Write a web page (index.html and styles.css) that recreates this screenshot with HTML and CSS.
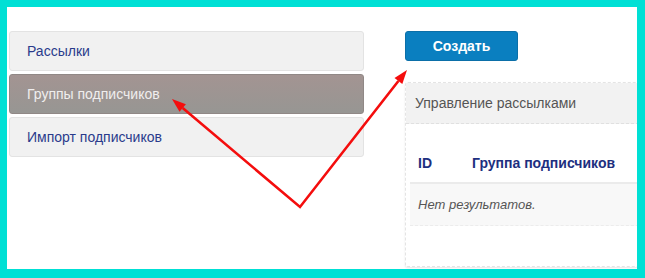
FILE: index.html
```html
<!DOCTYPE html>
<html lang="ru">
<head>
<meta charset="utf-8">
<title>Рассылки</title>
<link rel="stylesheet" href="styles.css">
</head>
<body>
<div class="frame">
  <nav class="menu">
    <a class="menu-item">Рассылки</a>
    <a class="menu-item active">Группы подписчиков</a>
    <a class="menu-item">Импорт подписчиков</a>
  </nav>
  <div class="content">
    <button class="btn">Создать</button>
    <div class="panel">
      <div class="panel-head">Управление рассылками</div>
      <div class="table">
        <div class="thead">
          <span class="col-id">ID</span>
          <span class="col-group">Группа подписчиков</span>
        </div>
        <div class="empty">Нет результатов.</div>
      </div>
    </div>
  </div>
</div>
<svg class="arrows" width="645" height="278" viewBox="0 0 645 278">
  <polyline points="182.7,108 300,207 398.4,81" fill="none" stroke="#f40d0d" stroke-width="2.6" stroke-linejoin="miter"/>
  <polygon points="172,99 185.9,104.2 179.5,111.8" fill="#f40d0d"/>
  <polygon points="407,70 402.3,84.1 394.5,77.9" fill="#f40d0d"/>
</svg>
</body>
</html>
```

FILE: styles.css
```css
html, body {
  margin: 0;
  padding: 0;
}
body {
  position: relative;
  width: 645px;
  height: 278px;
  box-sizing: border-box;
  padding: 7px 8px 9px 7px;
  background: #00e0d5;
  font-family: "Liberation Sans", Arial, sans-serif;
  overflow: hidden;
}
.frame {
  height: 262px;
  background: #fff;
  display: flex;
  gap: 41px;
  padding: 24px 0 0 2px;
  box-sizing: border-box;
  overflow: hidden;
}
.menu {
  width: 355px;
  flex-shrink: 0;
  display: flex;
  flex-direction: column;
  gap: 3px;
}
.menu-item {
  height: 40px;
  box-sizing: border-box;
  display: flex;
  align-items: center;
  padding-left: 17px;
  background: #f1f1f1;
  border: 1px solid #e3e3e3;
  border-radius: 3px;
  color: #2a3b8c;
  font-size: 14px;
}
.menu-item.active {
  background: linear-gradient(#a39492, #979693);
  border-color: #908886;
  color: #f0eeee;
}
.content {
  flex: 1;
  min-width: 0;
  display: flex;
  flex-direction: column;
  align-items: flex-start;
}
.btn {
  width: 113px;
  height: 30px;
  border: 1px solid #0b6fa8;
  border-radius: 3px;
  background: #0a7fc0;
  color: #fff;
  font-family: inherit;
  font-size: 14px;
  font-weight: bold;
  padding: 0;
}
.panel {
  margin-top: 21px;
  width: 260px;
  height: 185px;
  flex-shrink: 0;
  box-sizing: border-box;
  border: 1px dashed #e4e4e4;
  border-radius: 3px;
  box-shadow: 0 1px 2px rgba(0,0,0,0.1);
  background: #fff;
}
.panel-head {
  height: 41px;
  box-sizing: border-box;
  display: flex;
  align-items: center;
  padding-left: 9px;
  background: #f2f2f2;
  border-bottom: 1px dashed #e0e0e0;
  color: #555;
  font-size: 14px;
}
.table {
  margin: 20px 0 0 4px;
}
.thead {
  height: 40px;
  box-sizing: border-box;
  display: flex;
  align-items: center;
  border-bottom: 2px solid #ebebeb;
  color: #1d2f80;
  font-weight: bold;
  font-size: 14px;
}
.col-id {
  width: 62px;
  padding-left: 8px;
  box-sizing: border-box;
}
.empty {
  height: 42px;
  box-sizing: border-box;
  display: flex;
  align-items: center;
  padding-left: 8px;
  background: #f8f8f8;
  border-bottom: 1px dashed #ececec;
  color: #555;
  font-style: italic;
  font-size: 13px;
}
.arrows {
  position: absolute;
  left: 0;
  top: 0;
  pointer-events: none;
}
```
